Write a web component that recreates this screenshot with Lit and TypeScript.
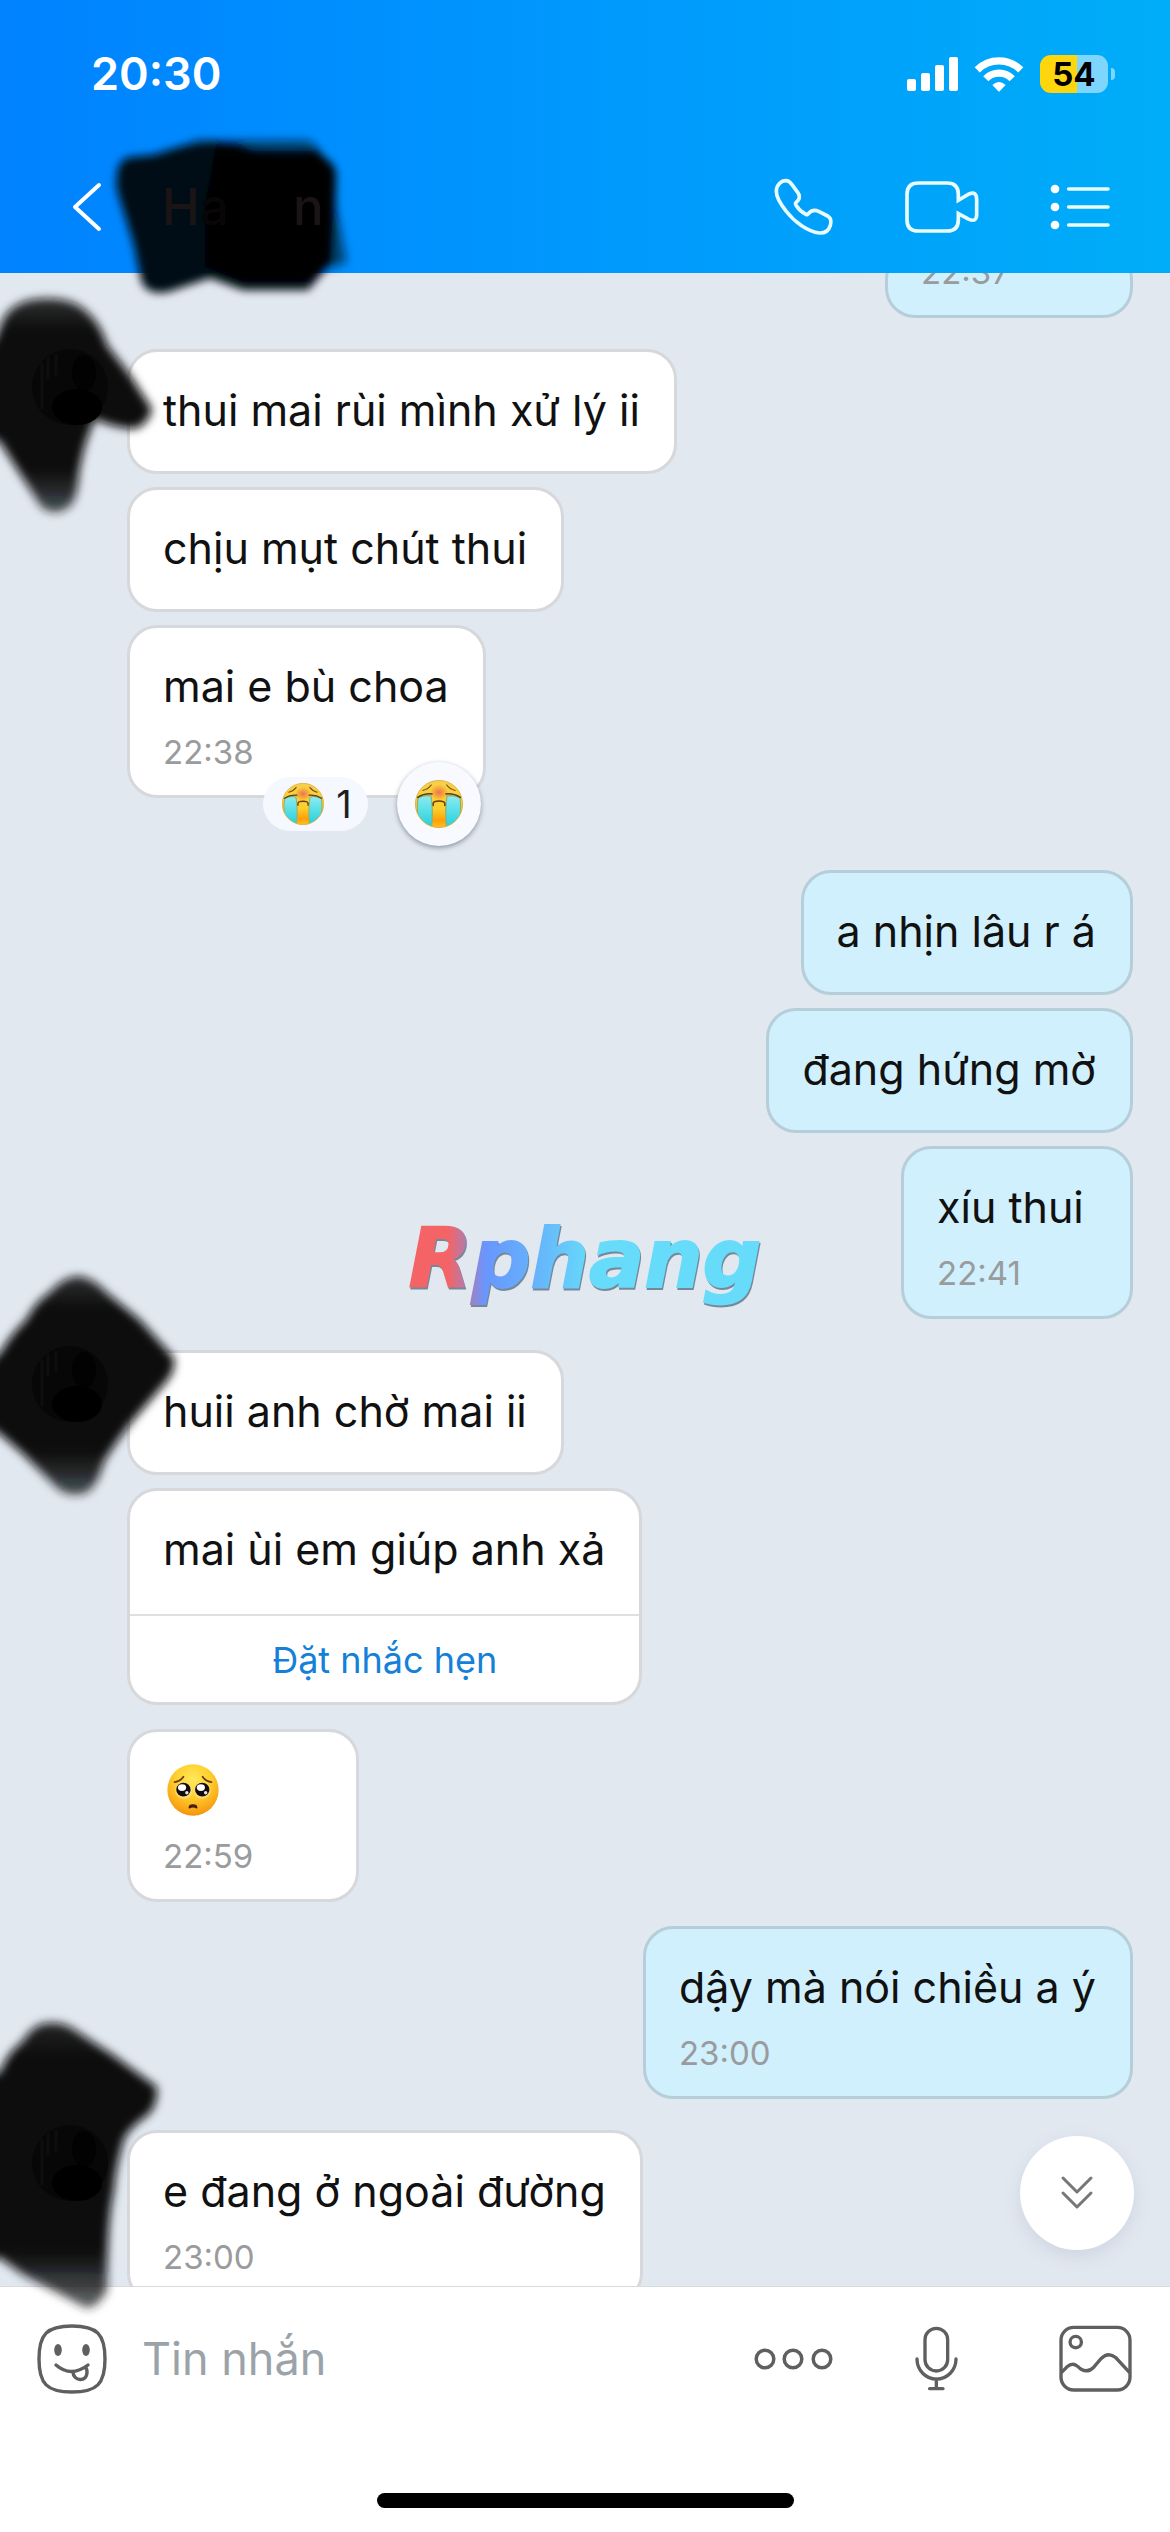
import { LitElement, html, css, svg, nothing, type TemplateResult } from "lit";
import { customElement, property } from "lit/decorators.js";

interface Message {
  text?: string;
  emoji?: boolean;
  time?: string;
  reaction?: number;
  reminder?: string;
}

interface Group {
  mine: boolean;
  messages: Message[];
  space: "near" | "mid" | "far" | "none";
  mark?: TemplateResult;
}

const cryFace = (id: string) => html`
  <svg class="face" viewBox="0 0 124 124" aria-hidden="true">
    <defs>
      <linearGradient id="${id}-skin" x1="0" y1="0" x2="0" y2="1">
        <stop offset="0" stop-color="#f6cf4a" />
        <stop offset="0.6" stop-color="#fbd02c" />
        <stop offset="0.85" stop-color="#ff9f0a" />
        <stop offset="1" stop-color="#ffc21c" />
      </linearGradient>
      <linearGradient id="${id}-tear" x1="0" y1="0" x2="0" y2="1">
        <stop offset="0" stop-color="#8cecf0" />
        <stop offset="1" stop-color="#1fcfdd" />
      </linearGradient>
      <radialGradient id="${id}-blush">
        <stop offset="0" stop-color="#f0624a" stop-opacity="0.85" />
        <stop offset="1" stop-color="#f0624a" stop-opacity="0" />
      </radialGradient>
      <clipPath id="${id}-clip"><circle cx="62" cy="62" r="60" /></clipPath>
    </defs>
    <circle cx="62" cy="62" r="61" fill="url(#${id}-skin)" stroke="#d9a528" stroke-width="2" />
    <ellipse cx="62" cy="32" rx="24" ry="20" fill="url(#${id}-blush)" />
    <g clip-path="url(#${id}-clip)">
      <path d="M8 46Q24 38 41 41Q47 70 43 124H14Q2 80 8 46Z" fill="url(#${id}-tear)" stroke="#8fb070" stroke-width="3" />
      <path d="M116 46Q100 38 83 41Q77 70 81 124H110Q122 80 116 46Z" fill="url(#${id}-tear)" stroke="#8fb070" stroke-width="3" />
    </g>
    <path d="M7 45Q24 34 44 36M117 45Q100 34 80 36" fill="none" stroke="#5c3a1c" stroke-width="4" stroke-linecap="round" />
    <path d="M20 27Q34 24 42 13M104 27Q90 24 82 13" fill="none" stroke="#7a4a12" stroke-width="3" stroke-linecap="round" />
    <path d="M47 66V60Q48 54 62 54T77 60V66" fill="none" stroke="#6b3c12" stroke-width="4" stroke-linecap="round" stroke-linejoin="round" />
  </svg>
`;

const pleadFace = html`
  <svg class="plead" viewBox="0 0 152 152" role="img" aria-label="🥺">
    <defs>
      <radialGradient id="plead-skin" cx="0.5" cy="0.3" r="0.75">
        <stop offset="0" stop-color="#ffe95c" />
        <stop offset="0.45" stop-color="#ffd02e" />
        <stop offset="0.85" stop-color="#f79f14" />
        <stop offset="1" stop-color="#e98c10" />
      </radialGradient>
    </defs>
    <circle cx="76" cy="76" r="75" fill="url(#plead-skin)" />
    <ellipse cx="49" cy="78" rx="25" ry="24" fill="#fbe08a" opacity="0.7" />
    <ellipse cx="103" cy="78" rx="25" ry="24" fill="#fbe08a" opacity="0.7" />
    <ellipse cx="48" cy="75" rx="21" ry="20" fill="#140c0a" />
    <ellipse cx="103" cy="75" rx="21" ry="20" fill="#140c0a" />
    <ellipse cx="44" cy="69" rx="12" ry="10" fill="#fff" />
    <ellipse cx="99" cy="69" rx="12" ry="10" fill="#fff" />
    <circle cx="58" cy="84" r="5" fill="#e8e4e0" />
    <circle cx="113" cy="84" r="5" fill="#e8e4e0" />
    <path d="M22 53Q38 52 48 37M130 53Q114 52 104 37" fill="none" stroke="#6a3a10" stroke-width="5" stroke-linecap="round" />
    <path d="M65 128Q65 120 76 120T87 128Q76 122 65 128Z" fill="#4a1c0c" stroke="#4a1c0c" stroke-width="4" stroke-linejoin="round" />
  </svg>
`;

const portrait = (x: number, y: number) => svg`
  <g transform="translate(${x} ${y})">
    <circle r="38" fill="#080707" />
    <path d="M-28 -24V22M-22 -30V-8M-14 -33V-12" stroke="#100d0e" stroke-width="3" />
    <ellipse cx="14" cy="-14" rx="12" ry="18" fill="#020202" />
    <ellipse cx="7" cy="20" rx="25" ry="18" fill="#000" />
  </g>
`;

const markOne = html`
  <svg class="mark mark-a" viewBox="0 280 180 250" aria-hidden="true">
    <defs><filter id="soft-a" x="-20%" y="-20%" width="140%" height="140%"><feGaussianBlur stdDeviation="5" /></filter>
    <linearGradient id="ink-a" x1="0" y1="0" x2="0" y2="1"><stop offset="0" stop-color="#0d0e0f" stop-opacity="0.85" /><stop offset="0.15" stop-color="#070808" /><stop offset="0.8" stop-color="#090a0b" /><stop offset="1" stop-color="#17191a" stop-opacity="0.75" /></linearGradient></defs>
    <path filter="url(#soft-a)" fill="url(#ink-a)" d="M-20 350Q-6 345 0 325Q8 300 36 297Q62 294 78 303Q98 315 107 343L130 373L152 407Q148 423 134 427Q112 425 95 417Q84 440 79 470Q78 492 72 502Q58 516 42 506Q22 475 0 440L-20 430Z" />
    ${portrait(70, 385)}
  </svg>
`;

const markTwo = html`
  <svg class="mark mark-b" viewBox="0 1260 200 250" aria-hidden="true">
    <defs><filter id="soft-b" x="-20%" y="-20%" width="140%" height="140%"><feGaussianBlur stdDeviation="5" /></filter>
    <linearGradient id="ink-b" x1="0" y1="0" x2="0" y2="1"><stop offset="0" stop-color="#0d0e0f" stop-opacity="0.85" /><stop offset="0.15" stop-color="#0a0b0b" /><stop offset="0.8" stop-color="#090a0b" /><stop offset="1" stop-color="#17191a" stop-opacity="0.75" /></linearGradient></defs>
    <path filter="url(#soft-b)" fill="url(#ink-b)" d="M80 1275Q96 1279 106 1291L140 1319L174 1357Q176 1370 166 1381L130 1423Q110 1449 103 1463Q98 1484 86 1492Q70 1497 58 1488L22 1452L0 1433L-20 1420V1370L0 1352Q12 1332 26 1319Q36 1300 50 1291Q64 1275 80 1275Z" />
    ${portrait(70, 1383)}
  </svg>
`;

const markThree = html`
  <svg class="mark mark-c" viewBox="0 2010 180 310" aria-hidden="true">
    <defs><filter id="soft-c" x="-20%" y="-20%" width="140%" height="140%"><feGaussianBlur stdDeviation="5" /></filter>
    <linearGradient id="ink-c" x1="0" y1="0" x2="0" y2="1"><stop offset="0" stop-color="#0d0e0f" stop-opacity="0.9" /><stop offset="0.12" stop-color="#070808" /><stop offset="0.8" stop-color="#0a0a0b" /><stop offset="1" stop-color="#222426" stop-opacity="0.7" /></linearGradient></defs>
    <path filter="url(#soft-c)" fill="url(#ink-c)" d="M48 2023Q64 2021 78 2032L113 2055L157 2087Q158 2104 149 2114Q130 2127 124 2139Q115 2170 114 2190Q107 2220 107 2290Q98 2308 86 2308L56 2292L22 2274L0 2258H-20V2080L0 2072Q8 2052 22 2042Q34 2023 48 2023Z" />
    ${portrait(70, 2163)}
  </svg>
`;

const GROUPS: Group[] = [
  { mine: true, space: "none", messages: [{ time: "22:37" }] },
  {
    mine: false,
    space: "mid",
    mark: markOne,
    messages: [
      { text: "thui mai rùi mình xử lý ii" },
      { text: "chịu mụt chút thui" },
      { text: "mai e bù choa", time: "22:38", reaction: 1 },
    ],
  },
  {
    mine: true,
    space: "far",
    messages: [{ text: "a nhịn lâu r á" }, { text: "đang hứng mờ" }, { text: "xíu thui", time: "22:41" }],
  },
  {
    mine: false,
    space: "mid",
    mark: markTwo,
    messages: [{ text: "huii anh chờ mai ii" }, { text: "mai ùi em giúp anh xả", reminder: "Đặt nhắc hẹn" }],
  },
  { mine: false, space: "near", messages: [{ emoji: true, time: "22:59" }] },
  { mine: true, space: "near", messages: [{ text: "dậy mà nói chiều a ý", time: "23:00" }] },
  { mine: false, space: "mid", mark: markThree, messages: [{ text: "e đang ở ngoài đường", time: "23:00" }] },
];

@customElement("chat-bubble")
export class ChatBubble extends LitElement {
  @property({ attribute: false }) message: Message = {};
  @property({ type: Boolean }) mine = false;

  static styles = css`
    :host {
      display: block;
      max-width: 100%;
    }
    .bubble {
      position: relative;
      box-sizing: border-box;
      min-width: 232px;
      border: 3px solid #d6d8db;
      border-radius: 30px;
      background: #fff;
      color: #111;
    }
    .mine {
      background: #d0f0fd;
      border-color: #b5ced9;
    }
    .tail {
      min-width: 248px;
    }
    .body {
      display: flex;
      flex-direction: column;
      gap: 16px;
      padding: 28px 34px 31px 33px;
    }
    .timed {
      padding-bottom: 23px;
    }
    .linked {
      padding-bottom: 35px;
    }
    .tail .body {
      padding-top: 0;
    }
    .text {
      margin: 0;
      font-size: 43px;
      line-height: 60px;
    }
    .line {
      display: flex;
      align-items: center;
      height: 60px;
      padding-left: 4px;
    }
    .plead {
      width: 52px;
      height: 52px;
    }
    .face {
      display: block;
      width: 42px;
      height: 42px;
    }
    .react .face {
      width: 48px;
      height: 48px;
    }
    time {
      font-size: 33px;
      line-height: 40px;
      color: #999b9d;
    }
    button {
      font: inherit;
      margin: 0;
      border: 0;
      padding: 0;
      cursor: pointer;
    }
    .remind {
      display: block;
      width: 100%;
      border-top: 2px solid #dedfe1;
      border-radius: 0 0 27px 27px;
      background: none;
      color: #1480d8;
      font-size: 36px;
      line-height: 44px;
      padding: 22px 0 20px;
    }
    .reactions {
      position: absolute;
      right: 2px;
      bottom: -51px;
      display: flex;
      align-items: center;
      gap: 29px;
    }
    .count {
      display: flex;
      align-items: center;
      gap: 12px;
      height: 54px;
      padding: 0 16px 0 19px;
      border-radius: 27px;
      background: #f5f8fe;
      color: #1c1e20;
      font-size: 38px;
    }
    .react {
      display: grid;
      place-items: center;
      width: 84px;
      height: 84px;
      border-radius: 50%;
      background: #f8faff;
      box-shadow: 0 2px 5px #8c96a2;
    }
  `;

  render() {
    const m = this.message;
    const tail = !m.text && !m.emoji;
    return html`
      <div class="bubble ${this.mine ? "mine" : ""} ${tail ? "tail" : ""}">
        <div class="body ${m.time ? "timed" : ""} ${m.reminder ? "linked" : ""}">
          ${m.text ? html`<p class="text">${m.text}</p>` : nothing}
          ${m.emoji ? html`<div class="line">${pleadFace}</div>` : nothing}
          ${m.time ? html`<time>${m.time}</time>` : nothing}
        </div>
        ${m.reminder ? html`<button class="remind" type="button">${m.reminder}</button>` : nothing}
        ${m.reaction
          ? html`<div class="reactions">
              <button class="count" type="button">${cryFace("tally")}<span>${m.reaction}</span></button>
              <button class="react" type="button" aria-label="😭">${cryFace("pick")}</button>
            </div>`
          : nothing}
      </div>
    `;
  }
}

@customElement("app-root")
export class AppRoot extends LitElement {
  static styles = css`
    :host {
      display: flex;
      flex-direction: column;
      height: 100vh;
      overflow: hidden;
      position: relative;
      background: #e2e8f0;
      font-family: Inter, "Noto Sans", sans-serif;
    }
    svg {
      display: block;
      overflow: visible;
    }
    button {
      font: inherit;
      color: inherit;
      margin: 0;
      border: 0;
      padding: 0;
      background: none;
      cursor: pointer;
    }
    .head {
      position: relative;
      z-index: 2;
      flex: none;
      padding-bottom: 7px;
      background: linear-gradient(90deg, #0082ff, #0098fd 50%, #00adf8);
      color: #fff;
    }
    .status {
      display: flex;
      align-items: center;
      gap: 17px;
      height: 148px;
      padding: 0 55px 0 91px;
    }
    .clock {
      flex: 1;
      font-size: 45px;
      font-weight: 600;
      line-height: 60px;
    }
    .signal {
      width: 51px;
      height: 36px;
    }
    .wifi {
      width: 48px;
      height: 36px;
    }
    .power {
      display: flex;
      align-items: center;
      gap: 3px;
    }
    .cell {
      width: 68px;
      height: 38px;
      border-radius: 11px;
      background: linear-gradient(90deg, #fdd60e 54%, #7fd6fd 54%);
      color: #000;
      font-size: 33px;
      font-weight: 700;
      line-height: 38px;
      text-align: center;
    }
    .nub {
      width: 4px;
      height: 12px;
      border-radius: 0 6px 6px 0;
      background: #7fd6fd;
    }
    .nav {
      display: flex;
      align-items: center;
      gap: 71px;
      height: 118px;
      padding: 0 60px 0 71px;
    }
    .back {
      width: 32px;
      height: 50px;
    }
    .who {
      position: relative;
      flex: 1;
      margin-left: -12px;
    }
    .name {
      position: relative;
      display: flex;
      gap: 64px;
      margin: 0;
      font-size: 51px;
      line-height: 60px;
      font-weight: 500;
      color: #1a1514;
    }
    .dim {
      color: #080606;
    }
    .mask {
      position: absolute;
      left: -62px;
      top: -47px;
      width: 260px;
      height: 170px;
    }
    .phone {
      width: 61px;
      height: 60px;
    }
    .video {
      width: 74px;
      height: 60px;
    }
    .list {
      width: 60px;
      height: 60px;
    }
    .thread {
      flex: 1 1 0;
      min-height: 0;
      display: flex;
      flex-direction: column;
      padding: 0 37px 0 127px;
    }
    .group {
      position: relative;
      flex: none;
      display: flex;
      flex-direction: column;
      align-items: flex-start;
      gap: 13px;
    }
    .out {
      align-items: flex-end;
    }
    .none {
      margin-top: -24px;
    }
    .near {
      margin-top: 24px;
    }
    .mid {
      margin-top: 31px;
    }
    .far {
      margin-top: 72px;
    }
    .mark {
      position: absolute;
      z-index: 3;
      left: -127px;
      pointer-events: none;
      overflow: hidden;
    }
    .mark-a {
      top: -67px;
      width: 180px;
      height: 250px;
    }
    .mark-b {
      top: -89px;
      width: 200px;
      height: 250px;
    }
    .mark-c {
      top: -120px;
      width: 180px;
      height: 310px;
    }
    .brand {
      position: absolute;
      left: 50%;
      top: 50%;
      transform: translate(-50%, -50%);
      padding: 0 8px 14px;
      font-family: "DejaVu Sans", sans-serif;
      font-size: 82px;
      font-weight: 700;
      font-style: italic;
      line-height: 100px;
      color: transparent;
      background: linear-gradient(90deg, #f46466 13%, #6896ff 23%, #66b2fb 36%, #66dcfa 52%);
      -webkit-background-clip: text;
      background-clip: text;
      -webkit-text-stroke: 2px transparent;
      filter: drop-shadow(1px 2px 0 #74889a);
      pointer-events: none;
    }
    .composer {
      position: relative;
      z-index: 2;
      flex: none;
      background: #fff;
      border-top: 1px solid #d8dade;
      color: #5f5f5f;
    }
    .row {
      display: flex;
      align-items: center;
      height: 143px;
      padding: 0 38px 0 37px;
    }
    .sticker {
      width: 70px;
      height: 70px;
    }
    .field {
      flex: 1;
      min-width: 0;
      margin: 0 35px;
      border: 0;
      padding: 0;
      outline: 0;
      background: none;
      color: #111;
      font: inherit;
      font-size: 45px;
      line-height: 60px;
    }
    .field::placeholder {
      color: #9ba3a9;
      opacity: 1;
    }
    .tools {
      display: flex;
      align-items: center;
    }
    .more {
      width: 80px;
      height: 24px;
      margin-right: 81px;
    }
    .mic {
      width: 45px;
      height: 65px;
      margin-right: 100px;
    }
    .photo {
      width: 73px;
      height: 67px;
    }
    .bar {
      width: 417px;
      height: 15px;
      margin: 63px auto 24px;
      border-radius: 8px;
      background: #000;
    }
    .jump {
      position: absolute;
      right: 36px;
      top: -151px;
      display: grid;
      place-items: center;
      width: 114px;
      height: 114px;
      border-radius: 50%;
      background: #fff;
      box-shadow: 0 6px 18px #ced5e1;
    }
    .down {
      width: 34px;
      height: 34px;
    }
  `;

  private header() {
    return html`
      <header class="head">
        <div class="status">
          <span class="clock">20:30</span>
          <svg class="signal" viewBox="0 0 51 36" fill="#fff" aria-hidden="true">
            <rect x="0" y="23" width="9" height="12" rx="2" />
            <rect x="14" y="17" width="9" height="18" rx="2" />
            <rect x="28" y="9" width="9" height="26" rx="2" />
            <rect x="42" y="1" width="9" height="34" rx="2" />
          </svg>
          <svg class="wifi" viewBox="825 164 144 109" aria-hidden="true">
            <path d="M831 206A94 94 0 0 1 963 206M857 233A56 56 0 0 1 937 233" fill="none" stroke="#fff" stroke-width="22" />
            <path d="M877 252Q897 234 917 252L899 271Q897 273 895 271Z" fill="#fff" />
          </svg>
          <div class="power"><span class="cell">54</span><span class="nub"></span></div>
        </div>
        <nav class="nav">
          <button type="button" aria-label="Back">
            <svg class="back" viewBox="0 0 32 50" fill="none" stroke="#fff" stroke-width="4" stroke-linecap="round" stroke-linejoin="round">
              <path d="M28 3L4 25L28 47" />
            </svg>
          </button>
          <div class="who">
            <svg class="mask" viewBox="100 130 260 170" aria-hidden="true">
              <defs><filter id="soft-head" x="-20%" y="-20%" width="140%" height="140%"><feGaussianBlur stdDeviation="4" /></filter></defs>
              <g filter="url(#soft-head)">
                <path fill="#001222" opacity="0.6" d="M190 140H306Q316 141 322 155L336 172V205L347 262L332 268L300 240Z" />
                <path fill="#000d18" d="M117 190Q114 160 130 157L153 155L185 145L215 142L240 149L318 155Q336 161 336 176L332 262L308 290H243L210 278L168 292Q146 296 141 280L134 245Z" />
                <path fill="#000" d="M216 146Q234 141 252 151H316Q332 160 334 178L330 262L308 282H243L205 267V205Z" />
              </g>
            </svg>
            <h1 class="name"><span>H<span class="dim">a</span></span><span>n</span></h1>
          </div>
          <button type="button" aria-label="Call">
            <svg class="phone" viewBox="215 532 183 180" fill="none" stroke="#e8fbff" stroke-width="11" stroke-linejoin="round">
              <path d="M225 575C225 555 240 543 254 543Q264 543 272 555L289 578Q298 590 291 601L284 609Q281 612 285 618Q296 635 315 645Q318 646 320 643Q333 627 352 635L379 649Q393 658 387 677Q380 701 354 700C320 696 280 668 254 634Q225 598 225 575Z" />
            </svg>
          </button>
          <button type="button" aria-label="Video call">
            <svg class="video" viewBox="611 531 222 180" fill="none" stroke="#e8fbff" stroke-width="11">
              <path d="M771 601V583Q771 549 737 549H651Q617 549 617 583V659Q617 693 651 693H737Q771 693 771 659V641L803 658Q826 668 826 643V598Q826 573 803 582Z" />
            </svg>
          </button>
          <button type="button" aria-label="Options">
            <svg class="list" viewBox="1050 531 180 180" aria-hidden="true">
              <g fill="#fff"><circle cx="1065" cy="567" r="13" /><circle cx="1065" cy="621" r="13" /><circle cx="1065" cy="675" r="13" /></g>
              <path d="M1106 567H1224M1106 621H1224M1106 675H1224" stroke="#e8fbff" stroke-width="11" stroke-linecap="round" />
            </svg>
          </button>
        </nav>
      </header>
    `;
  }

  private footer() {
    return html`
      <footer class="composer">
        <button class="jump" type="button" aria-label="Latest messages">
          <svg class="down" viewBox="0 0 34 34" fill="none" stroke="#777" stroke-width="3" stroke-linecap="round" stroke-linejoin="round">
            <path d="M3 2L17 16L31 2M3 17L17 31L31 17" />
          </svg>
        </button>
        <div class="row">
          <button type="button" aria-label="Stickers">
            <svg class="sticker" viewBox="0 0 70 70" fill="none" stroke="#5f5f5f" stroke-width="3.4" stroke-linecap="round">
              <path d="M35 2C60 2 68 10 68 35S60 68 35 68S2 60 2 35S10 2 35 2Z" />
              <ellipse cx="21" cy="26" rx="3.8" ry="6" fill="#5f5f5f" stroke="none" />
              <ellipse cx="49" cy="26" rx="3.8" ry="6" fill="#5f5f5f" stroke="none" />
              <path d="M19 41Q34 54 51 41M36 48C36 57 50 59 50 48Q50 46 49 43" />
            </svg>
          </button>
          <input class="field" type="text" placeholder="Tin nhắn" aria-label="Tin nhắn" />
          <div class="tools">
            <button type="button" aria-label="More">
              <svg class="more" viewBox="0 0 80 24" fill="none" stroke="#5f5f5f" stroke-width="3.5">
                <circle cx="12" cy="12" r="8.8" /><circle cx="40" cy="12" r="8.8" /><circle cx="69" cy="12" r="8.8" />
              </svg>
            </button>
            <button type="button" aria-label="Voice message">
              <svg class="mic" viewBox="641 168 135 195" fill="none" stroke="#5f5f5f" stroke-width="10" stroke-linecap="round">
                <rect x="674" y="175" width="68" height="128" rx="34" />
                <path d="M650 267A58 60 0 0 0 767 267M708 327V355M688 356H728" />
              </svg>
            </button>
            <button type="button" aria-label="Photos">
              <svg class="photo" viewBox="1076 163 218 200" fill="none" stroke="#5f5f5f" stroke-width="10">
                <rect x="1082" y="170" width="206" height="187" rx="38" />
                <circle cx="1126" cy="214" r="17" />
                <path d="M1083 305L1101 287Q1116 274 1131 286Q1156 312 1180 289L1202 263Q1224 242 1246 261L1287 305" />
              </svg>
            </button>
          </div>
        </div>
        <div class="bar"></div>
      </footer>
    `;
  }

  render() {
    return html`
      ${this.header()}
      <main class="thread">
        ${GROUPS.map(
          (g) => html`<section class="group ${g.mine ? "out" : ""} ${g.space}">
            ${g.messages.map((m) => html`<chat-bubble .message=${m} ?mine=${g.mine}></chat-bubble>`)}
            ${g.mark ?? nothing}
          </section>`,
        )}
      </main>
      <div class="brand">Rphang</div>
      ${this.footer()}
    `;
  }
}
